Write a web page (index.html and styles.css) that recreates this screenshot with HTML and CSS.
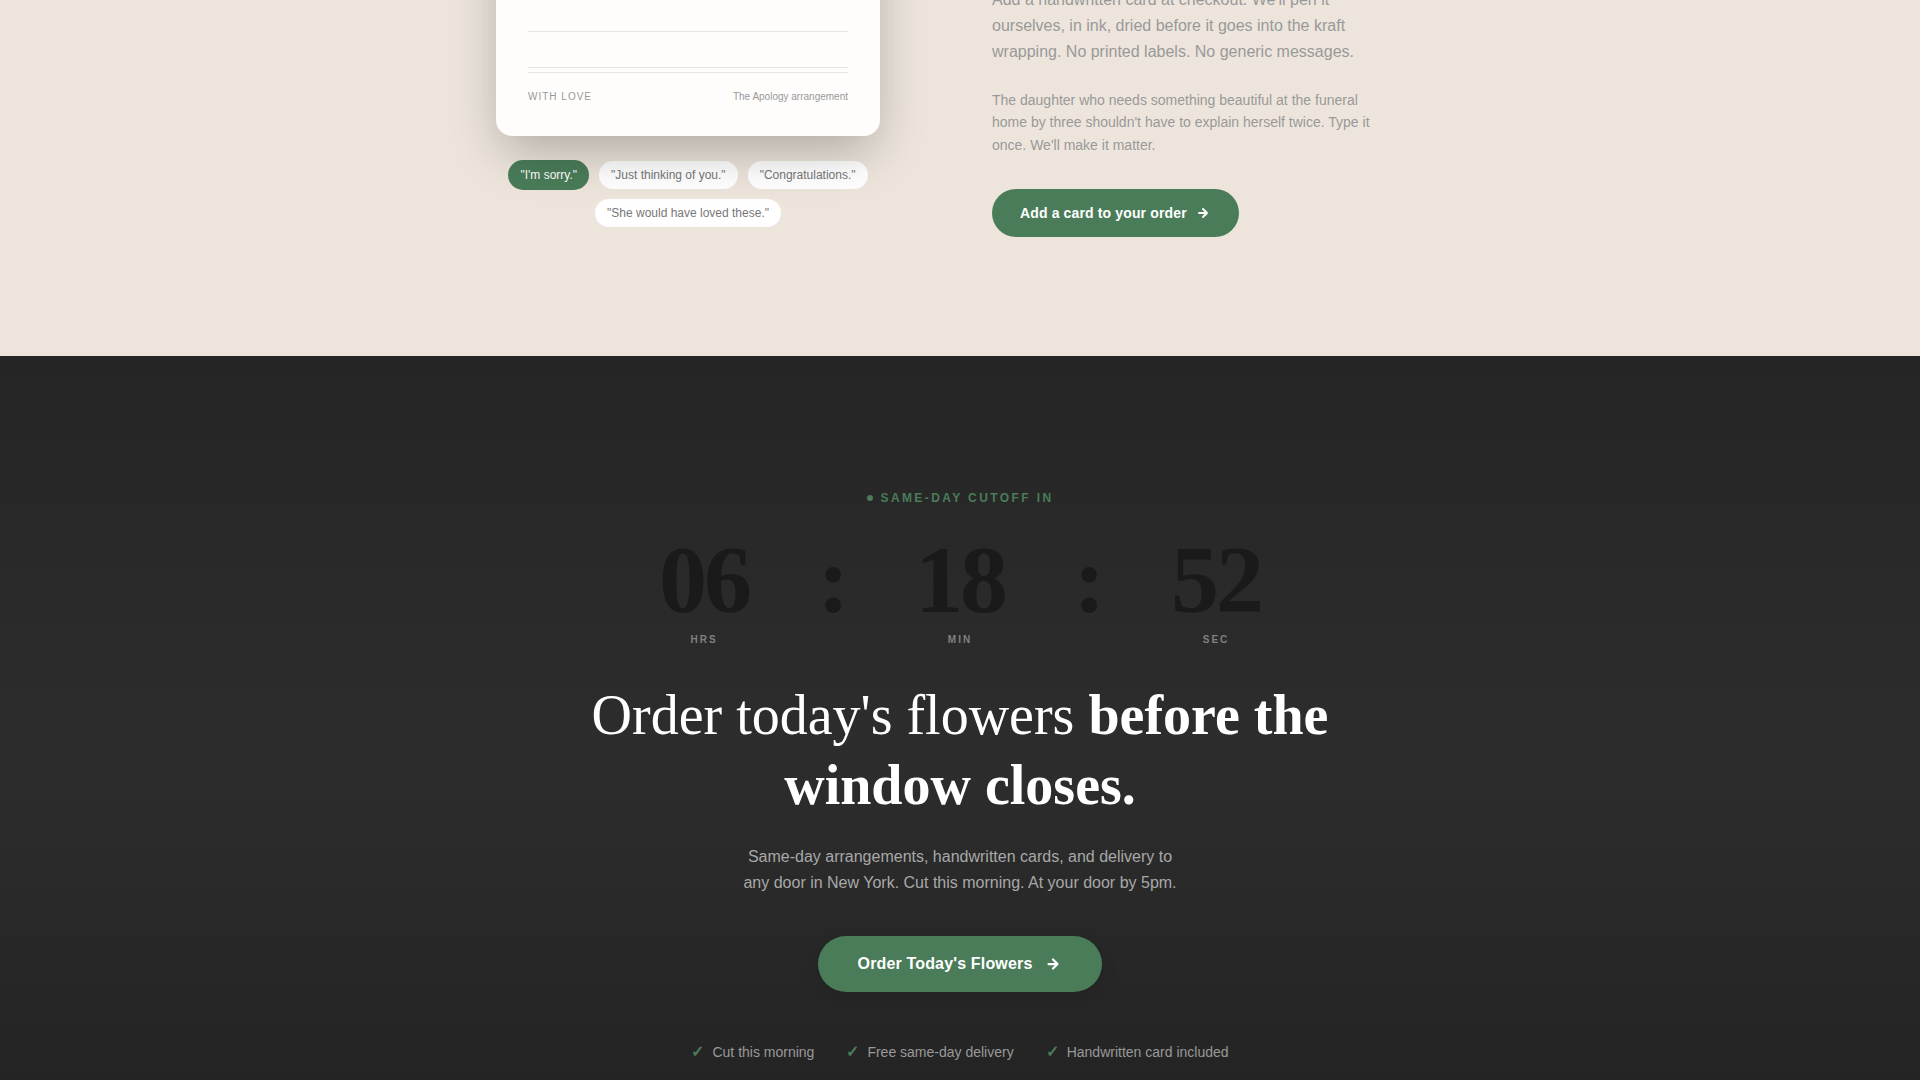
FILE: index.html
```html
<!DOCTYPE html>
<html lang="en">
<head>
  <meta charset="utf-8">
  <meta name="viewport" content="width=device-width, initial-scale=1">
  <title>Same-day flowers</title>
  <link rel="stylesheet" href="styles.css">
</head>
<body>
  <section class="note">
    <div class="note-grid">
      <div class="note-preview">
        <div class="card">
          <div class="rule"></div>
          <div class="rule"></div>
          <div class="rule"></div>
          <div class="rule"></div>
          <div class="rule"></div>
          <div class="card-foot">
            <span class="card-sign">WITH LOVE</span>
            <span>The Apology arrangement</span>
          </div>
        </div>
        <div class="chips">
          <button type="button" class="chip chip-active">"I'm sorry."</button>
          <button type="button" class="chip">"Just thinking of you."</button>
          <button type="button" class="chip">"Congratulations."</button>
          <button type="button" class="chip">"She would have loved these."</button>
        </div>
      </div>
      <div class="note-copy">
        <p class="lead">Add a handwritten card at checkout. We'll pen it ourselves, in ink, dried before it goes into the kraft wrapping. No printed labels. No generic messages.</p>
        <p class="aside">The daughter who needs something beautiful at the funeral home by three shouldn't have to explain herself twice. Type it once. We'll make it matter.</p>
        <a class="btn" href="#order">Add a card to your order
          <svg class="arrow" viewBox="0 0 24 24" aria-hidden="true"><path d="M6 12h12M12 6l6 6-6 6"/></svg>
        </a>
      </div>
    </div>
  </section>

  <section class="cutoff" id="order">
    <p class="eyebrow"><span class="dot"></span>SAME-DAY CUTOFF IN</p>
    <div class="timer">
      <div class="unit"><span class="digits">06</span><span class="unit-label">HRS</span></div>
      <span class="colon">:</span>
      <div class="unit"><span class="digits">18</span><span class="unit-label">MIN</span></div>
      <span class="colon">:</span>
      <div class="unit"><span class="digits">52</span><span class="unit-label">SEC</span></div>
    </div>
    <h2 class="headline">Order today's flowers <strong>before the window closes.</strong></h2>
    <p class="sub">Same-day arrangements, handwritten cards, and delivery to any door in New York. Cut this morning. At your door by 5pm.</p>
    <a class="btn btn-large" href="#checkout">Order Today's Flowers
      <svg class="arrow" viewBox="0 0 24 24" aria-hidden="true"><path d="M6 12h12M12 6l6 6-6 6"/></svg>
    </a>
    <ul class="perks">
      <li><span class="tick">✓</span>Cut this morning</li>
      <li><span class="tick">✓</span>Free same-day delivery</li>
      <li><span class="tick">✓</span>Handwritten card included</li>
    </ul>
  </section>
</body>
</html>
```

FILE: styles.css
```css
* { box-sizing: border-box; }

body {
  margin: 0;
  min-height: 100vh;
  display: flex;
  flex-direction: column;
  background: #262626;
  font-family: "Liberation Sans", Arial, sans-serif;
  overflow-x: hidden;
}

p, h2, ul { margin: 0; padding: 0; }

/* Handwritten note */
.note {
  margin-top: -144px;
  padding: 0 24px 119px;
  background: #ede5dc;
}

.note-grid {
  display: grid;
  grid-template-columns: 1fr 1fr;
  gap: 64px;
  max-width: 1024px;
  margin: 0 auto;
}

.note-preview {
  display: flex;
  flex-direction: column;
  align-items: center;
  padding-bottom: 10px;
}

.card {
  position: relative;
  z-index: 1;
  width: 100%;
  max-width: 384px;
  padding: 32px 32px 31px;
  border-radius: 16px;
  background: #fefdfc;
  box-shadow: 0 20px 50px -6px rgba(10, 10, 0, 0.28);
}

.rule {
  height: 36px;
  border-bottom: 1px solid #e5e4e2;
}

.card-foot {
  display: flex;
  justify-content: space-between;
  margin-top: 4px;
  padding-top: 16px;
  border-top: 1px solid #e5e4e2;
  font-size: 10px;
  line-height: 16px;
  color: #999;
}

.card-sign { letter-spacing: 1px; }

.chips {
  display: flex;
  flex-wrap: wrap;
  justify-content: center;
  gap: 10px;
  max-width: 384px;
  margin-top: 25px;
}

.chip {
  padding: 6px 12px;
  border: 0;
  border-radius: 16px;
  background: #fff;
  color: #777;
  font: 12px/16px "Liberation Sans", Arial, sans-serif;
}

.chip-active {
  margin: -1px 0;
  padding: 7px 12px;
  background: #4a7c59;
  color: #fff;
}

.note-copy {
  align-self: end;
  max-width: 384px;
  color: #999;
}

.lead { font-size: 16px; line-height: 26px; }

.aside {
  margin: 24px 0 33px;
  font-size: 14px;
  line-height: 1.6;
}

.btn {
  display: inline-flex;
  align-items: center;
  gap: 8px;
  height: 48px;
  padding: 0 28px;
  border-radius: 28px;
  background: #4a7c59;
  color: #fff;
  font-size: 14px;
  font-weight: 700;
  letter-spacing: 0.01em;
  text-decoration: none;
  vertical-align: top;
}

.arrow {
  width: 16px;
  height: 16px;
  fill: none;
  stroke: currentColor;
  stroke-width: 3;
  stroke-linecap: round;
  stroke-linejoin: round;
}

/* Countdown */
.cutoff {
  flex: 1;
  display: flex;
  flex-direction: column;
  align-items: center;
  padding: 128px 24px 16px;
  background: linear-gradient(#252525, #2d2d2d 55%, #242424);
  text-align: center;
}

.eyebrow {
  display: flex;
  align-items: center;
  gap: 8px;
  color: #4a7c59;
  font-size: 12px;
  font-weight: 700;
  line-height: 28px;
  letter-spacing: 0.2em;
}

.dot {
  width: 6px;
  height: 6px;
  border-radius: 50%;
  background: currentColor;
}

.timer {
  display: flex;
  gap: 64px;
  margin: 20px 0 32px;
}

.unit {
  display: flex;
  flex-direction: column;
  align-items: center;
  min-width: 96px;
}

.digits, .colon {
  color: #1a1a1a;
  font: 700 96px/96px "Liberation Serif", "Times New Roman", serif;
  letter-spacing: -3px;
}

.colon { min-width: 32px; }

.unit-label {
  margin-top: 4px;
  color: #808080;
  font-size: 10px;
  font-weight: 700;
  line-height: 16px;
  letter-spacing: 2px;
}

.headline {
  max-width: 768px;
  color: #fff;
  font: 400 56px/70px "Liberation Serif", "Times New Roman", serif;
}

.sub {
  max-width: 448px;
  margin: 24px 0 40px;
  color: #a8a8a8;
  font-size: 16px;
  line-height: 26px;
}

.btn-large {
  gap: 12px;
  height: 56px;
  padding: 0 40px;
  font-size: 16px;
  box-shadow: 0 4px 16px rgba(0, 0, 0, 0.12);
}

.btn-large .arrow { width: 18px; height: 18px; }

.perks {
  display: flex;
  flex-wrap: wrap;
  justify-content: center;
  gap: 32px;
  margin-top: 48px;
  list-style: none;
  color: #999;
  font-size: 14px;
  line-height: 24px;
}

.perks li { display: flex; gap: 8px; }

.tick {
  color: #4a7c59;
  font-size: 16px;
  font-weight: 700;
}
```
